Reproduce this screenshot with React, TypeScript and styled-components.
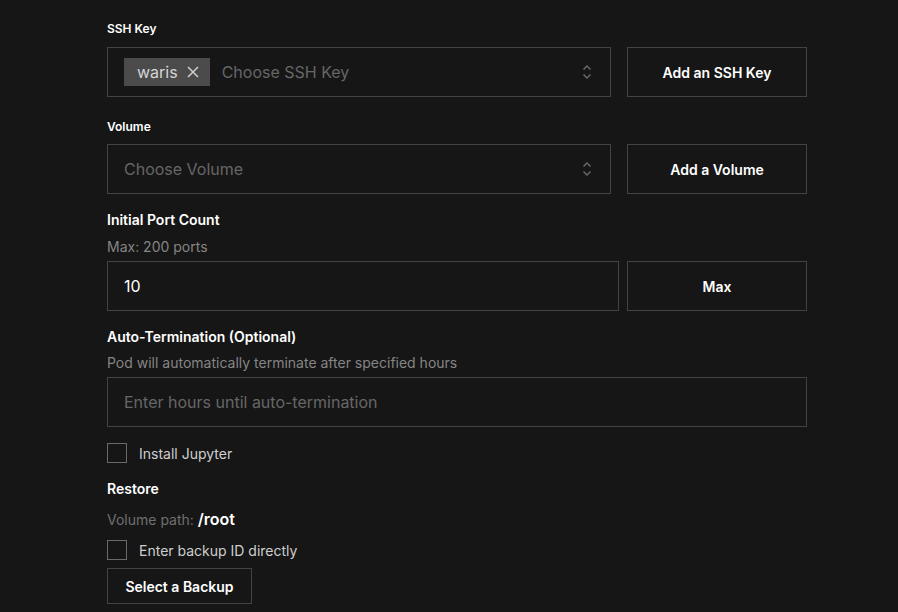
import React from 'react';
import styled, { createGlobalStyle } from 'styled-components';

const GlobalStyle = createGlobalStyle`
    html, body {
        margin: 0;
        background: #161616;
    }
    body {
        font-family: Inter, 'Noto Sans', sans-serif;
        color: #fff;
    }
`;

const Page = styled.div`
    width: 700px;
    padding: 21px 0 0 107px;
    display: flex;
    flex-direction: column;
`;

const SmallLabel = styled.div<{ $mt?: number; $mb: number }>`
    font-size: 12px;
    font-weight: 600;
    line-height: 16px;
    margin-top: ${(p) => p.$mt ?? 0}px;
    margin-bottom: ${(p) => p.$mb}px;
`;

const Title = styled.div<{ $mt: number }>`
    font-size: 14px;
    font-weight: 600;
    line-height: 20px;
    margin-top: ${(p) => p.$mt}px;
`;

const Helper = styled.div<{ $mt: number }>`
    font-size: 14px;
    line-height: 20px;
    color: #858585;
    margin-top: ${(p) => p.$mt}px;
    margin-bottom: 4px;
`;

const Row = styled.div<{ $gap: number }>`
    display: flex;
    gap: ${(p) => p.$gap}px;
`;

const Box = styled.div<{ $width?: number }>`
    box-sizing: border-box;
    height: 50px;
    width: ${(p) => (p.$width ? `${p.$width}px` : '100%')};
    border: 1px solid #434343;
    display: flex;
    align-items: center;
    padding: 0 17px 0 16px;
    font-size: 16px;
`;

const Placeholder = styled.span`
    color: #666;
    flex: 1;
`;

const Value = styled.span`
    color: #fff;
`;

const Tag = styled.span`
    height: 28px;
    display: inline-flex;
    align-items: center;
    gap: 9px;
    padding: 0 11px 0 13px;
    background: #4b4b4b;
    color: #d6d6d6;
    margin-right: 12px;
`;

const ActionButton = styled.button<{ $width: number; $height?: number }>`
    box-sizing: border-box;
    width: ${(p) => p.$width}px;
    height: ${(p) => p.$height ?? 50}px;
    background: transparent;
    border: 1px solid #434343;
    color: #fff;
    font-family: inherit;
    font-size: 14px;
    font-weight: 600;
    cursor: pointer;
    padding: 0;
`;

const ButtonWrap = styled.div`
    margin-top: 8px;
`;

const CheckRow = styled.label<{ $mt: number }>`
    display: flex;
    align-items: center;
    gap: 12px;
    margin-top: ${(p) => p.$mt}px;
    font-size: 14px;
    color: #cfcfcf;
`;

const Check = styled.span`
    box-sizing: border-box;
    width: 20px;
    height: 20px;
    border: 1px solid #6a6a6a;
`;

const PathLine = styled.div`
    margin-top: 8px;
    font-size: 14px;
    line-height: 24px;
    color: #6f6f6f;
    strong {
        color: #fff;
        font-size: 16px;
        font-weight: 600;
    }
`;

const Chevrons = () => (
    <svg width="12" height="18" viewBox="0 0 12 18" fill="none" stroke="#6a6a6a" strokeWidth="1.4">
        <path d="M2.5 6.5 L6 3 L9.5 6.5" />
        <path d="M2.5 11.5 L6 15 L9.5 11.5" />
    </svg>
);

const Cross = () => (
    <svg width="12" height="12" viewBox="0 0 12 12" stroke="#cfcfcf" strokeWidth="1.5">
        <path d="M1 1 L11 11 M11 1 L1 11" />
    </svg>
);

export default function App(): JSX.Element {
    return (
        <>
            <GlobalStyle />
            <Page>
                <SmallLabel $mb={10}>SSH Key</SmallLabel>
                <Row $gap={16}>
                    <Box $width={504}>
                        <Tag>
                            waris <Cross />
                        </Tag>
                        <Placeholder>Choose SSH Key</Placeholder>
                        <Chevrons />
                    </Box>
                    <ActionButton $width={180}>Add an SSH Key</ActionButton>
                </Row>

                <SmallLabel $mt={22} $mb={9}>
                    Volume
                </SmallLabel>
                <Row $gap={16}>
                    <Box $width={504}>
                        <Placeholder>Choose Volume</Placeholder>
                        <Chevrons />
                    </Box>
                    <ActionButton $width={180}>Add a Volume</ActionButton>
                </Row>

                <Title $mt={16}>Initial Port Count</Title>
                <Helper $mt={7}>Max: 200 ports</Helper>
                <Row $gap={8}>
                    <Box $width={512}>
                        <Value>10</Value>
                    </Box>
                    <ActionButton $width={180}>Max</ActionButton>
                </Row>

                <Title $mt={16}>Auto-Termination (Optional)</Title>
                <Helper $mt={6}>Pod will automatically terminate after specified hours</Helper>
                <Box>
                    <Placeholder>Enter hours until auto-termination</Placeholder>
                </Box>

                <CheckRow $mt={16}>
                    <Check />
                    Install Jupyter
                </CheckRow>

                <Title $mt={16}>Restore</Title>
                <PathLine>
                    Volume path: <strong>/root</strong>
                </PathLine>
                <CheckRow $mt={8}>
                    <Check />
                    Enter backup ID directly
                </CheckRow>
                <ButtonWrap>
                    <ActionButton $width={145} $height={36}>
                        Select a Backup
                    </ActionButton>
                </ButtonWrap>
            </Page>
        </>
    );
}
